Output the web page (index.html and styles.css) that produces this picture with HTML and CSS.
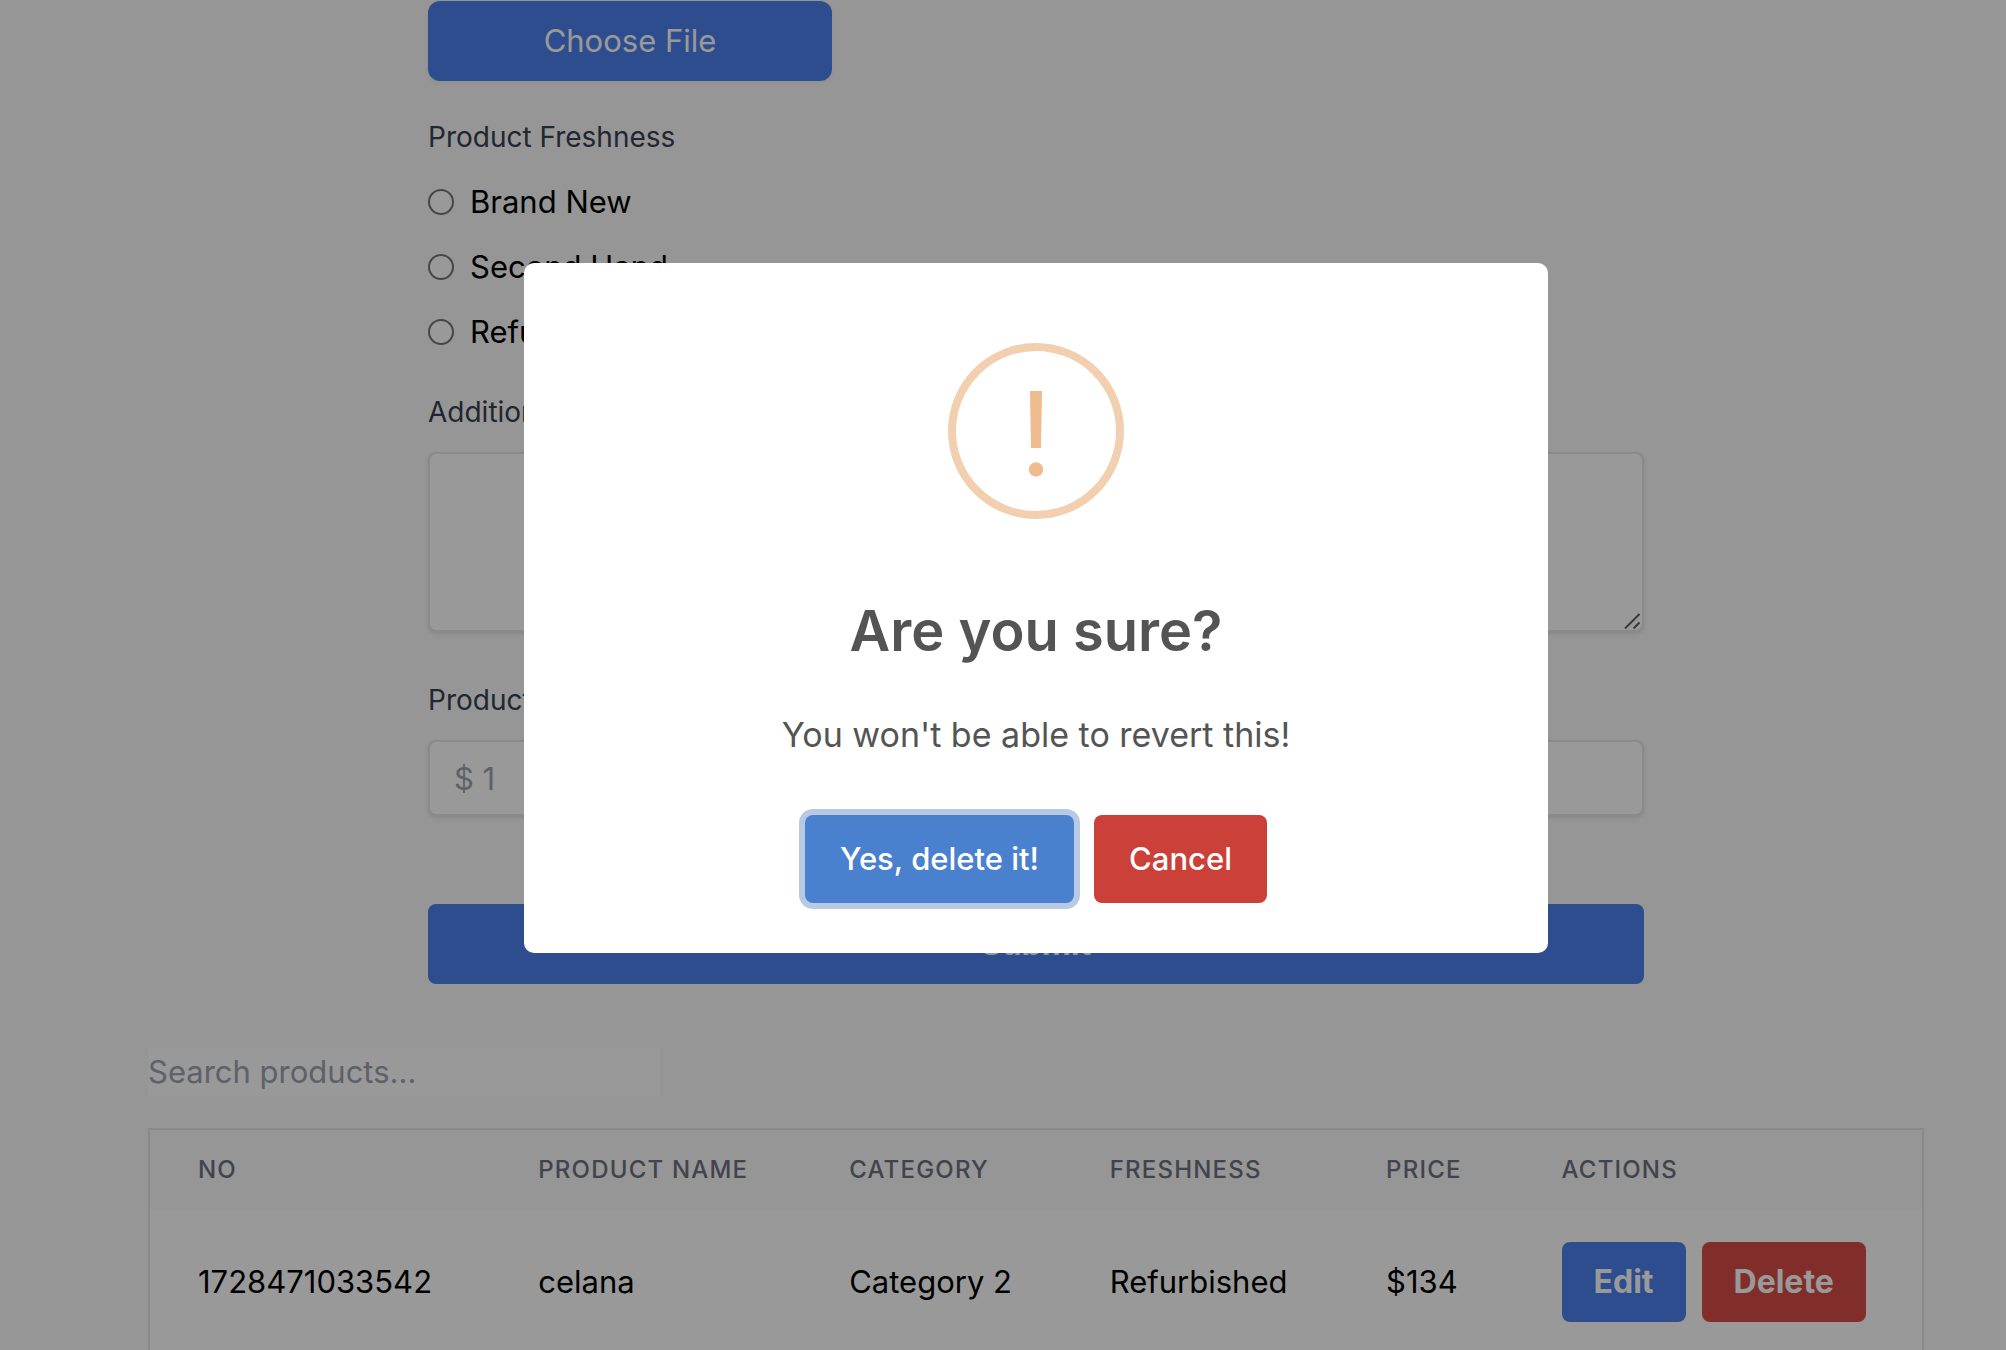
FILE: index.html
```
<!DOCTYPE html>
<html lang="en">
<head>
<meta charset="utf-8">
<title>Products</title>
<link rel="stylesheet" href="styles.css">
</head>
<body>
<main class="page">
  <form class="product-form">
    <button class="file-button" type="button">Choose File</button>

    <fieldset class="field freshness">
      <legend class="field-label">Product Freshness</legend>
      <div class="radio-list">
        <label class="radio"><input type="radio" name="freshness"><span>Brand New</span></label>
        <label class="radio"><input type="radio" name="freshness"><span>Second Hand</span></label>
        <label class="radio"><input type="radio" name="freshness"><span>Refurbished</span></label>
      </div>
    </fieldset>

    <div class="field description">
      <label class="field-label" for="description">Additional Description</label>
      <div class="textarea-wrap">
        <textarea class="control" id="description"></textarea>
        <svg class="grip" viewBox="0 0 16 16" aria-hidden="true"><path d="M1 15.500 15.500 1M9.500 15.500 15.500 9.500"/></svg>
      </div>
    </div>

    <div class="field price">
      <label class="field-label" for="price">Product Price</label>
      <input class="control" id="price" type="text" placeholder="$ 1">
    </div>

    <button class="submit" type="submit">Submit</button>
  </form>

  <section class="products">
    <input class="search" type="text" placeholder="Search products..." aria-label="Search products">
    <table class="table">
      <colgroup>
        <col class="col-no"><col class="col-name"><col class="col-category"><col class="col-freshness"><col class="col-price"><col class="col-actions">
      </colgroup>
      <thead>
        <tr><th>No</th><th>Product Name</th><th>Category</th><th>Freshness</th><th>Price</th><th>Actions</th></tr>
      </thead>
      <tbody>
        <tr>
          <td>1728471033542</td><td>celana</td><td>Category 2</td><td>Refurbished</td><td>$134</td>
          <td><div class="actions"><button class="edit" type="button">Edit</button><button class="delete" type="button">Delete</button></div></td>
        </tr>
      </tbody>
    </table>
  </section>
</main>

<div class="backdrop">
  <div class="dialog" role="dialog" aria-modal="true" aria-labelledby="dialog-title" aria-describedby="dialog-text">
    <svg class="warning-icon" viewBox="0 0 176 176" aria-hidden="true">
      <circle cx="88" cy="88" r="84" fill="none" stroke="#f2cfae" stroke-width="8"/>
      <path d="M82 48H94L93 105H83Z" fill="#efbc8f"/>
      <circle cx="88" cy="126.500" r="7.200" fill="#efbc8f"/>
    </svg>
    <h2 class="dialog-title" id="dialog-title">Are you sure?</h2>
    <p class="dialog-text" id="dialog-text">You won't be able to revert this!</p>
    <div class="dialog-actions">
      <button class="confirm" type="button">Yes, delete it!</button>
      <button class="cancel" type="button">Cancel</button>
    </div>
  </div>
</div>
</body>
</html>
```
FILE: styles.css
```
* { box-sizing: border-box; }

body {
  margin: 0;
  height: 100vh;
  overflow: hidden;
  background: #fafafa;
  color: #000;
  font-family: Inter, "Liberation Sans", sans-serif;
  font-size: 31px;
  line-height: 48px;
}

button, input, textarea {
  margin: 0;
  padding: 0;
  border: 0;
  font: inherit;
}

.page { padding: 1px 82px 0 148px; }

.product-form {
  display: flex;
  flex-direction: column;
  align-items: stretch;
  max-width: 1216px;
  margin: 0 auto;
}

.file-button {
  align-self: flex-start;
  width: 404px;
  height: 80px;
  margin-bottom: 36px;
  border-radius: 12px;
  background: #4e80ee;
  color: #fff;
  box-shadow: 0 2px 4px rgba(0, 0, 0, 0.05);
}

.field { min-width: 0; margin: 0; padding: 0; border: 0; }
.freshness { margin-bottom: 36px; }
.description { margin-bottom: 48px; }
.price { margin-bottom: 88px; }

.field-label {
  display: block;
  margin-bottom: 20px;
  padding: 0;
  color: #374151;
  font-size: 28px;
  line-height: 40px;
}

.radio-list { display: flex; flex-direction: column; gap: 16px; }
.radio { display: flex; align-items: center; gap: 16px; height: 49px; }
.radio input {
  appearance: none;
  width: 26px;
  height: 26px;
  border: 2px solid #767676;
  border-radius: 50%;
  background: #fff;
}

.control {
  display: block;
  width: 100%;
  border: 2px solid #e5e7eb;
  border-radius: 8px;
  background: #fff;
  box-shadow: 0 2px 4px rgba(0, 0, 0, 0.1);
}
.textarea-wrap { position: relative; }
textarea.control { height: 180px; padding: 16px 24px; resize: none; }
input.control { height: 76px; padding: 0 24px; }
.grip {
  position: absolute;
  right: 4px;
  bottom: 3px;
  width: 16px;
  height: 16px;
  fill: none;
  stroke: #606060;
  stroke-width: 2;
}

::placeholder { color: #9ca3af; opacity: 1; }

.submit {
  height: 80px;
  border-radius: 8px;
  background: #4e80ee;
  color: #fff;
  font-size: 32px;
  font-weight: 700;
}

.products { padding-top: 64px; }
.search {
  display: block;
  width: 512px;
  height: 48px;
  margin-bottom: 32px;
  background: #fff;
}

.table {
  width: 100%;
  table-layout: fixed;
  border-spacing: 0;
  border: 2px solid #e5e7eb;
  background: #fff;
}
.col-no { width: 19.2%; }
.col-name { width: 17.55%; }
.col-category { width: 14.7%; }
.col-freshness { width: 15.6%; }
.col-price { width: 9.9%; }
.col-actions { width: 23.05%; }

th {
  padding: 24px 48px;
  background: #fafafa;
  color: #6b7280;
  font-size: 24px;
  font-weight: 500;
  line-height: 32px;
  letter-spacing: 0.05em;
  text-align: left;
  text-transform: uppercase;
  white-space: nowrap;
}
td { padding: 32px 48px; white-space: nowrap; }

.actions { display: flex; gap: 16px; }
.actions button {
  height: 80px;
  padding: 0 32px;
  border-radius: 8px;
  color: #fff;
  font-size: 32px;
  font-weight: 700;
}
.edit { background: #4e80ee; }
.delete { background: #d84e49; }

.backdrop {
  position: fixed;
  inset: 0;
  display: flex;
  align-items: center;
  justify-content: center;
  padding: 0 0 134px 66px;
  background: rgba(0, 0, 0, 0.4);
}

.dialog {
  display: flex;
  flex-direction: column;
  align-items: center;
  width: 1024px;
  padding: 80px 32px 50px;
  border-radius: 10px;
  background: #fff;
  color: #545454;
}
.warning-icon { width: 176px; height: 176px; }
.dialog-title {
  margin: 76px 0 0;
  font-size: 56px;
  font-weight: 600;
  line-height: 72px;
}
.dialog-text {
  margin: 40px 0 0;
  font-size: 34px;
  line-height: 56px;
}
.dialog-actions { display: flex; gap: 20px; margin-top: 52px; }
.dialog-actions button {
  height: 88px;
  padding: 0 35px;
  border-radius: 8px;
  color: #fff;
  font-weight: 500;
}
.confirm { background: #4981cf; box-shadow: 0 0 0 6px #b8cae3; }
.cancel { background: #cb4139; }
```
